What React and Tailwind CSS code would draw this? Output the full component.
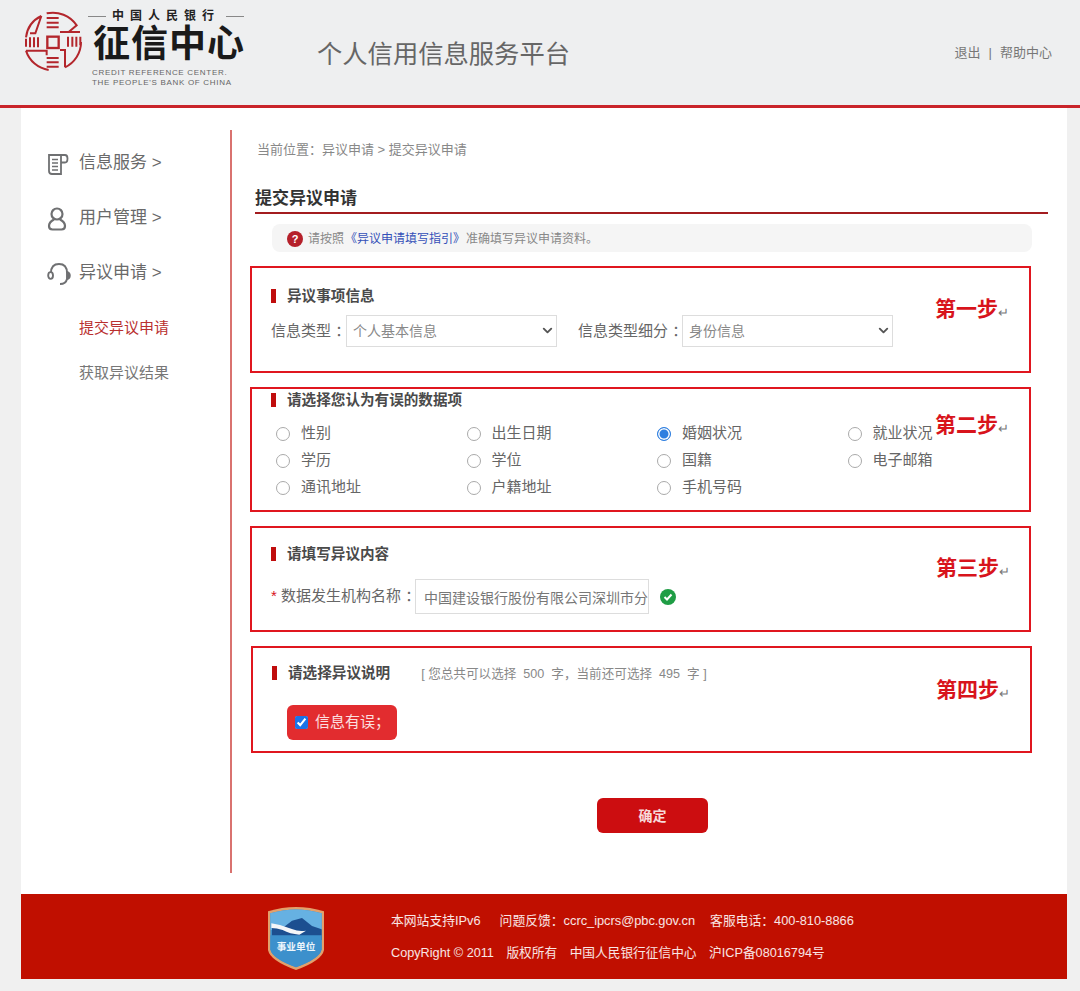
import React from 'react';
import { ChevronDown } from 'lucide-react';

const radios = [
    ['性别', '出生日期', '婚姻状况', '就业状况'],
    ['学历', '学位', '国籍', '电子邮箱'],
    ['通讯地址', '户籍地址', '手机号码'],
];

// coordinates follow a 3x crop of the logo
const Emblem = () => (
    <svg width="70" height="68" viewBox="0 0 210 204" fill="none" stroke="#b3262c" strokeWidth="6" className="shrink-0">
        <path d="M70 24 A82 82 0 0 0 24 88 M70 24 L52 76 H36" />
        <path d="M86 16 A86 86 0 0 1 176 52 L152 72" />
        <path d="M86 30 H122 M86 44 H122 M86 58 H122" />
        <path d="M126 72 H186" />
        <path d="M36 88 V118 M48 88 V118 M60 88 V118 M24 92 V116" />
        <path d="M150 86 V116 M163 86 V116 M175 86 V116 M187 86 V112" />
        <rect x="88" y="86" width="34" height="34" strokeWidth="7" />
        <path d="M24 128 H86 V142 M24 128 A84 84 0 0 0 92 186" />
        <path d="M86 150 H122 M86 163 H122 M86 176 H122" />
        <path d="M126 126 H141 V178 M189 102 A84 84 0 0 1 141 178" />
    </svg>
);

const DocIcon = () => (
    <svg width="22" height="24" viewBox="0 0 22 24" fill="none" stroke="#6f7072" strokeWidth="1.8">
        <path d="M2 3 H14 V22 H5 Q2 22 2 19 Z" />
        <path d="M14 3 H18 Q20.5 3 20.5 6.5 Q20.5 10.5 18 10.5 H14" />
        <path d="M5 7.5 H11 M5 11 H11 M5 14.5 H11 M5 18 H11" strokeWidth="1.3" />
    </svg>
);

const UserIcon = () => (
    <svg width="20" height="24" viewBox="0 0 20 24" fill="none" stroke="#6f7072" strokeWidth="2.2">
        <circle cx="10" cy="7" r="5.5" />
        <path d="M7 12.5 Q2 15 2 19 Q2 22.5 5.5 22.5 H14.5 Q18 22.5 18 19 Q18 15 13 12.5" />
    </svg>
);

const HeadsetIcon = () => (
    <svg width="24" height="24" viewBox="0 0 24 24" fill="none" stroke="#6f7072" strokeWidth="1.9">
        <path d="M4 11 Q4 2 12 2 Q20 2 20 11" />
        <ellipse cx="3.6" cy="13.5" rx="2.4" ry="3.4" />
        <path d="M20 10 Q22.8 11 22.8 13.5 Q22.8 16.5 20 17 Z" fill="#6f7072" />
        <path d="M20 17 Q19 22 13 22" />
    </svg>
);

const Shield = () => (
    <svg width="70" height="76" viewBox="0 0 210 228" className="shrink-0">
        <path d="M18 34 Q102 8 186 34 V150 Q180 182 102 210 Q24 182 18 150 Z" fill="#e2a06c" />
        <path d="M25 40 Q102 17 179 40 V148 Q174 176 102 202 Q30 176 25 148 Z" fill="#3c90cc" />
        <path d="M25 40 Q102 17 179 40 V90 H25 Z" fill="#66b1e2" />
        <path d="M30 82 L62 84 L90 62 L120 54 L150 78 L179 88 V120 H30 Z" fill="#1c4f90" />
        <path d="M28 70 Q60 74 92 88 Q110 96 132 92 L112 104 Q84 102 62 90 Q44 84 28 84 Z" fill="#f4f6f8" />
        <path d="M25 106 H179 V148 Q174 176 102 202 Q30 176 25 148 Z" fill="#3c90cc" />
        <text x="102" y="150" textAnchor="middle" fontSize="29" fontWeight="700" fill="#eef6fb" fontFamily="'Noto Sans CJK SC', sans-serif">事业单位</text>
    </svg>
);

const SideItem = ({ icon, label }) => (
    <div className="flex items-center h-[55px]">
        <div className="w-[58px] pl-[26px] pt-[2px] flex items-center h-[26px]">{icon}</div>
        <span className="text-[17px] text-[#6a6a6a] whitespace-nowrap">{label} &gt;</span>
    </div>
);

const SectionTitle = ({ children }) => (
    <div className="flex items-center">
        <span className="w-[5px] h-[14px] bg-[#c00d0d] mr-[11px]"></span>
        <span className="text-[14.6px] leading-[20px] font-bold text-[#4a4a4a]">{children}</span>
    </div>
);

const StepBox = ({ step, stepClass, className, children }) => (
    <div className={`relative border-2 border-[#e0161f] ${className}`}>
        {children}
        <div className={`absolute flex items-end ${stepClass}`}>
            <span className="text-[21px] font-bold text-[#d8141c] leading-none">{step}</span>
            <span className="text-[13px] text-[#777] leading-none">↵</span>
        </div>
    </div>
);

const Select = ({ value }) => (
    <div className="relative w-[211px] h-[32px]">
        <select
            defaultValue={value}
            className="appearance-none w-full h-full border border-[#ddd] text-sm text-[#888] pl-[6px] bg-white"
        >
            <option>{value}</option>
        </select>
        <ChevronDown size={15} strokeWidth={3} className="absolute right-[2px] top-[8px] text-[#555] pointer-events-none" />
    </div>
);

const App = () => {
    return (
        <div className='min-h-[991px] bg-[#f0f0f0] font-["Liberation_Sans","Noto_Sans_CJK_SC",sans-serif]'>
            <header className="h-[108px] bg-[#eeeff0] border-b-[3px] border-[#c9242a] flex items-start">
                <div className="ml-[18px] mt-[8px]">
                    <Emblem />
                </div>
                <div className="ml-0 mt-[8px] w-[160px]">
                    <div className="flex items-center gap-[6px] h-[16px]">
                        <span className="w-[18px] h-px bg-[#888]"></span>
                        <span className="w-[108px] text-xs font-bold text-[#222] tracking-[6px] leading-none whitespace-nowrap">中国人民银行</span>
                        <span className="w-[18px] h-px bg-[#888]"></span>
                    </div>
                    <div className="pl-[5px] text-[37px] font-bold text-[#1a1a1a] leading-[42px] tracking-[1px] whitespace-nowrap">征信中心</div>
                    <div className="pl-[4px] mt-[2px] text-[8px] text-[#666] leading-[10px] tracking-[0.7px] whitespace-nowrap">
                        <div>CREDIT REFERENCE CENTER.</div>
                        <div>THE PEOPLE'S BANK OF CHINA</div>
                    </div>
                </div>
                <div className="ml-[69px] mt-[35px] text-[25.3px] leading-[38px] text-[#666] whitespace-nowrap">个人信用信息服务平台</div>
                <div className="ml-auto mr-[28px] mt-[43px] text-[13px] leading-[20px] text-[#777] whitespace-nowrap">
                    退出<span className="mx-[8px]">|</span>帮助中心
                </div>
            </header>

            <div className="mx-[21px] w-[1046px] bg-white h-[786px] flex items-start">
                <aside className="w-[211px] h-[743px] mt-[22px] border-r-2 border-[#d9726f] shrink-0">
                    <div className="h-[5px]"></div>
                    <SideItem icon={<DocIcon />} label="信息服务" />
                    <SideItem icon={<UserIcon />} label="用户管理" />
                    <SideItem icon={<HeadsetIcon />} label="异议申请" />
                    <div className="pl-[58px] mt-[14px] text-[15px] text-[#b9302f] h-[45px] leading-[28px]">提交异议申请</div>
                    <div className="pl-[58px] text-[15px] text-[#777] leading-[28px]">获取异议结果</div>
                </aside>

                <main className="ml-[18px] w-[781px] pt-[32px]">
                    <div className="pl-[7px] text-[13px] text-[#888] leading-[20px] whitespace-nowrap">当前位置：异议申请 &gt; 提交异议申请</div>
                    <div className="ml-[5px] mr-[-17px] mt-[28px] pb-[2px] border-b-2 border-[#a31c1f] text-[17px] font-bold text-[#333] leading-[22px]">提交异议申请</div>
                    <div className="ml-[22px] mr-[-1px] mt-[10px] h-[28px] rounded-lg bg-[#f5f5f5] flex items-center pl-[15px] pt-[2px] text-xs text-[#888]">
                        <span className="w-[16px] h-[16px] rounded-full bg-[#b5202a] text-white text-[11px] font-bold flex items-center justify-center mr-[5px]">?</span>
                        请按照<span className="text-[#3450b8] mx-[1px]">《异议申请填写指引》</span>准确填写异议申请资料。
                    </div>

                    <StepBox step="第一步" stepClass="left-[683px] top-[30px]" className="mt-[14px] h-[107px] pl-[19px] pt-[18px]">
                        <SectionTitle>异议事项信息</SectionTitle>
                        <div className="flex items-center mt-[9px] text-[15px] text-[#666]">
                            <span className="w-[75px] whitespace-pre">信息类型 ：</span>
                            <Select value="个人基本信息" />
                            <span className="ml-[21px] w-[104px] whitespace-pre">信息类型细分 ：</span>
                            <Select value="身份信息" />
                        </div>
                    </StepBox>

                    <StepBox step="第二步" stepClass="left-[683px] top-[25px]" className="mt-[14px] h-[125px] pl-[19px] pt-[1px]">
                        <SectionTitle>请选择您认为有误的数据项</SectionTitle>
                        <div className="mt-[10px] ml-[5px] grid grid-cols-[190.5px_190.5px_190.5px_190px] auto-rows-[27px] text-[15px] text-[#666]">
                            {radios.flat().map((label) => (
                                <label key={label} className="flex items-center gap-[11px]">
                                    <input
                                        type="radio"
                                        name="item"
                                        defaultChecked={label === '婚姻状况'}
                                        className="appearance-none m-0 w-[14px] h-[14px] rounded-full border-[1.5px] border-[#aaa] checked:border-[#2f7fe0] checked:bg-[#2f7fe0] checked:shadow-[inset_0_0_0_1.5px_#fff]"
                                    />
                                    <span>{label}</span>
                                </label>
                            ))}
                        </div>
                    </StepBox>

                    <StepBox step="第三步" stepClass="left-[684px] top-[29px]" className="mt-[14px] h-[106px] pl-[19px] pt-[16px]">
                        <SectionTitle>请填写异议内容</SectionTitle>
                        <div className="flex items-center mt-[15px] text-[15px] text-[#666]">
                            <span className="text-[#d8141c] w-[10px]">*</span>
                            <span className="w-[134px] whitespace-pre">数据发生机构名称 ：</span>
                            <input
                                readOnly
                                value="中国建设银行股份有限公司深圳市分行"
                                className="w-[234px] h-[35px] border border-[#ddd] pl-[8px] text-sm text-[#777]"
                            />
                            <span className="ml-[11px] w-[16px] h-[16px] rounded-full bg-[#1f9d45] flex items-center justify-center">
                                <svg width="10" height="10" viewBox="0 0 10 10" fill="none" stroke="#fff" strokeWidth="2"><path d="M1.5 5 L4 7.5 L8.5 2.5" /></svg>
                            </span>
                        </div>
                    </StepBox>

                    <StepBox step="第四步" stepClass="left-[683px] top-[31px]" className="mt-[14px] ml-[1px] mr-[-1px] h-[107px] pl-[19px] pt-[14px]">
                        <div className="flex items-center">
                            <SectionTitle>请选择异议说明</SectionTitle>
                            <span className="ml-[31px] mt-[3px] text-[12.6px] text-[#888] whitespace-pre">[ 您总共可以选择  500  字，当前还可选择  495  字 ]</span>
                        </div>
                        <label className="mt-[21px] ml-[15px] w-[110px] h-[35px] rounded-md bg-[#e22c2f] flex items-center pl-[8px] gap-[7px] text-[15px] text-white/85">
                            <input type="checkbox" defaultChecked className="m-0 accent-[#1a73e8]" />
                            <span>信息有误；</span>
                        </label>
                    </StepBox>

                    <div className="flex justify-center mt-[45px] ml-[24px]">
                        <button className="w-[111px] h-[35px] rounded-md bg-[#cc0d10] text-white/85 text-sm font-bold">确定</button>
                    </div>
                </main>
            </div>

            <footer className="mx-[21px] w-[1046px] h-[85px] bg-[#c00f00] flex items-start text-white/90">
                <div className="ml-[241px] mt-[6px]">
                    <Shield />
                </div>
                <div className="ml-[59px] mt-[17px] leading-[20px] whitespace-nowrap">
                    <div className="flex text-[12.8px]">
                        <span>本网站支持IPv6</span>
                        <span className="ml-[19px]">问题反馈：ccrc_ipcrs@pbc.gov.cn</span>
                        <span className="ml-[15px]">客服电话：400-810-8866</span>
                    </div>
                    <div className="flex gap-[12.5px] mt-[12px] text-[12.7px]">
                        <span>CopyRight © 2011</span>
                        <span>版权所有</span>
                        <span>中国人民银行征信中心</span>
                        <span>沪ICP备08016794号</span>
                    </div>
                </div>
            </footer>
        </div>
    );
};

export default App;
